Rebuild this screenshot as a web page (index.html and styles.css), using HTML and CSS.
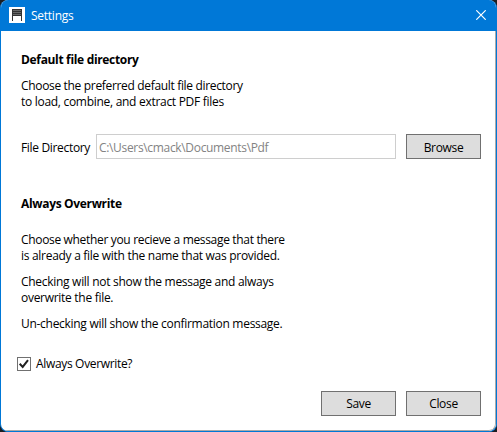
FILE: index.html
```html
<!DOCTYPE html>
<html lang="en">
<head>
<meta charset="utf-8">
<title>Settings</title>
<link rel="stylesheet" href="styles.css">
</head>
<body>
<div class="window">
  <header class="titlebar">
    <svg class="app-icon" width="16" height="16" viewBox="0 0 16 16">
      <rect width="16" height="16" fill="#fff"/>
      <path d="M3 2h10v12h-1V9H4v5H3z" fill="#333"/>
      <path d="M4 3.5h8M4 5.5h8M4 7.5h8" stroke="#777" stroke-width=".8"/>
    </svg>
    <span class="title">Settings</span>
    <svg class="close-icon" width="10" height="10" viewBox="0 0 10 10"><path d="M.3.3l9.4 9.4M9.7.3L.3 9.7" stroke="#fff" stroke-width="1.2"/></svg>
  </header>
  <main class="content">
    <h2 class="heading">Default file directory</h2>
    <p class="intro">Choose the preferred default file directory<br><span class="loose">to load, combine, and extract PDF files</span></p>
    <div class="directory">
      <label class="dir-label">File Directory</label>
      <div class="field">C:\Users\cmack\Documents\Pdf</div>
      <button class="button">Browse</button>
    </div>
    <h2 class="heading overwrite">Always Overwrite</h2>
    <div class="notes">
      <p>Choose whether you recieve a message that there<br><span class="loose">is already a file with the name that was provided.</span></p>
      <p class="loose">Checking will not show the message and always<br>overwrite the file.</p>
      <p class="loose">Un-checking will show the confirmation message.</p>
    </div>
    <div class="check">
      <svg width="14" height="14" viewBox="0 0 14 14"><rect x=".5" y=".5" width="13" height="13" fill="#fff" stroke="#707070"/><path d="M2.7 6.8l3 3.1L11 3.2" fill="none" stroke="#212121" stroke-width="2"/></svg>
      <span>Always Overwrite?</span>
    </div>
    <div class="actions">
      <button class="button">Save</button>
      <button class="button">Close</button>
    </div>
  </main>
</div>
</body>
</html>
```
FILE: styles.css
```css
* { box-sizing: border-box; }
body { margin: 0; background: #1b1e22; font: 12px/16px "Open Sans", "Noto Sans", sans-serif; letter-spacing: -0.33px; color: #000; }
p, h2 { margin: 0; white-space: nowrap; }
.window { width: 497px; height: 432px; border: 1px solid #0078d7; border-top: 0; border-radius: 8px; overflow: hidden; background: #fff; display: flex; flex-direction: column; }
.titlebar { height: 31px; flex: none; background: #0078d7; display: flex; align-items: center; padding: 0 10px 1px 8px; color: #fff; }
.title { margin-left: 6px; padding-top: 1px; letter-spacing: -0.25px; }
.close-icon { margin-left: auto; }
.content { flex: 1; padding: 21px 14px 0 20px; border-right: 1px solid #aaa; border-bottom: 1px solid #aaa; border-bottom-right-radius: 7px; }
.heading { font-size: 12px; line-height: 16px; font-weight: 700; }
.intro { margin-top: 10px; }
.directory { display: flex; align-items: center; margin-top: 24px; }
.dir-label { width: 75px; padding-top: 2px; white-space: nowrap; }
.field { width: 300px; height: 25px; border: 1px solid #cecece; padding: 5px 2px 0; line-height: 16px; color: #838383; white-space: nowrap; }
.button { width: 75px; height: 25px; border: 1px solid #707070; border-radius: 0; background: #ddd; padding: 1px 0 0; font: inherit; letter-spacing: inherit; color: #000; }
.directory .button { margin-left: 10px; padding-top: 2px; }
.overwrite { margin-top: 37px; }
.notes { margin-top: 20px; display: grid; gap: 10px; }
.loose { letter-spacing: -0.29px; }
.check { display: flex; align-items: center; gap: 5px; margin: 24px 0 0 -4px; }
.actions { display: flex; gap: 10px; margin: 19px 0 0 300px; }
```
